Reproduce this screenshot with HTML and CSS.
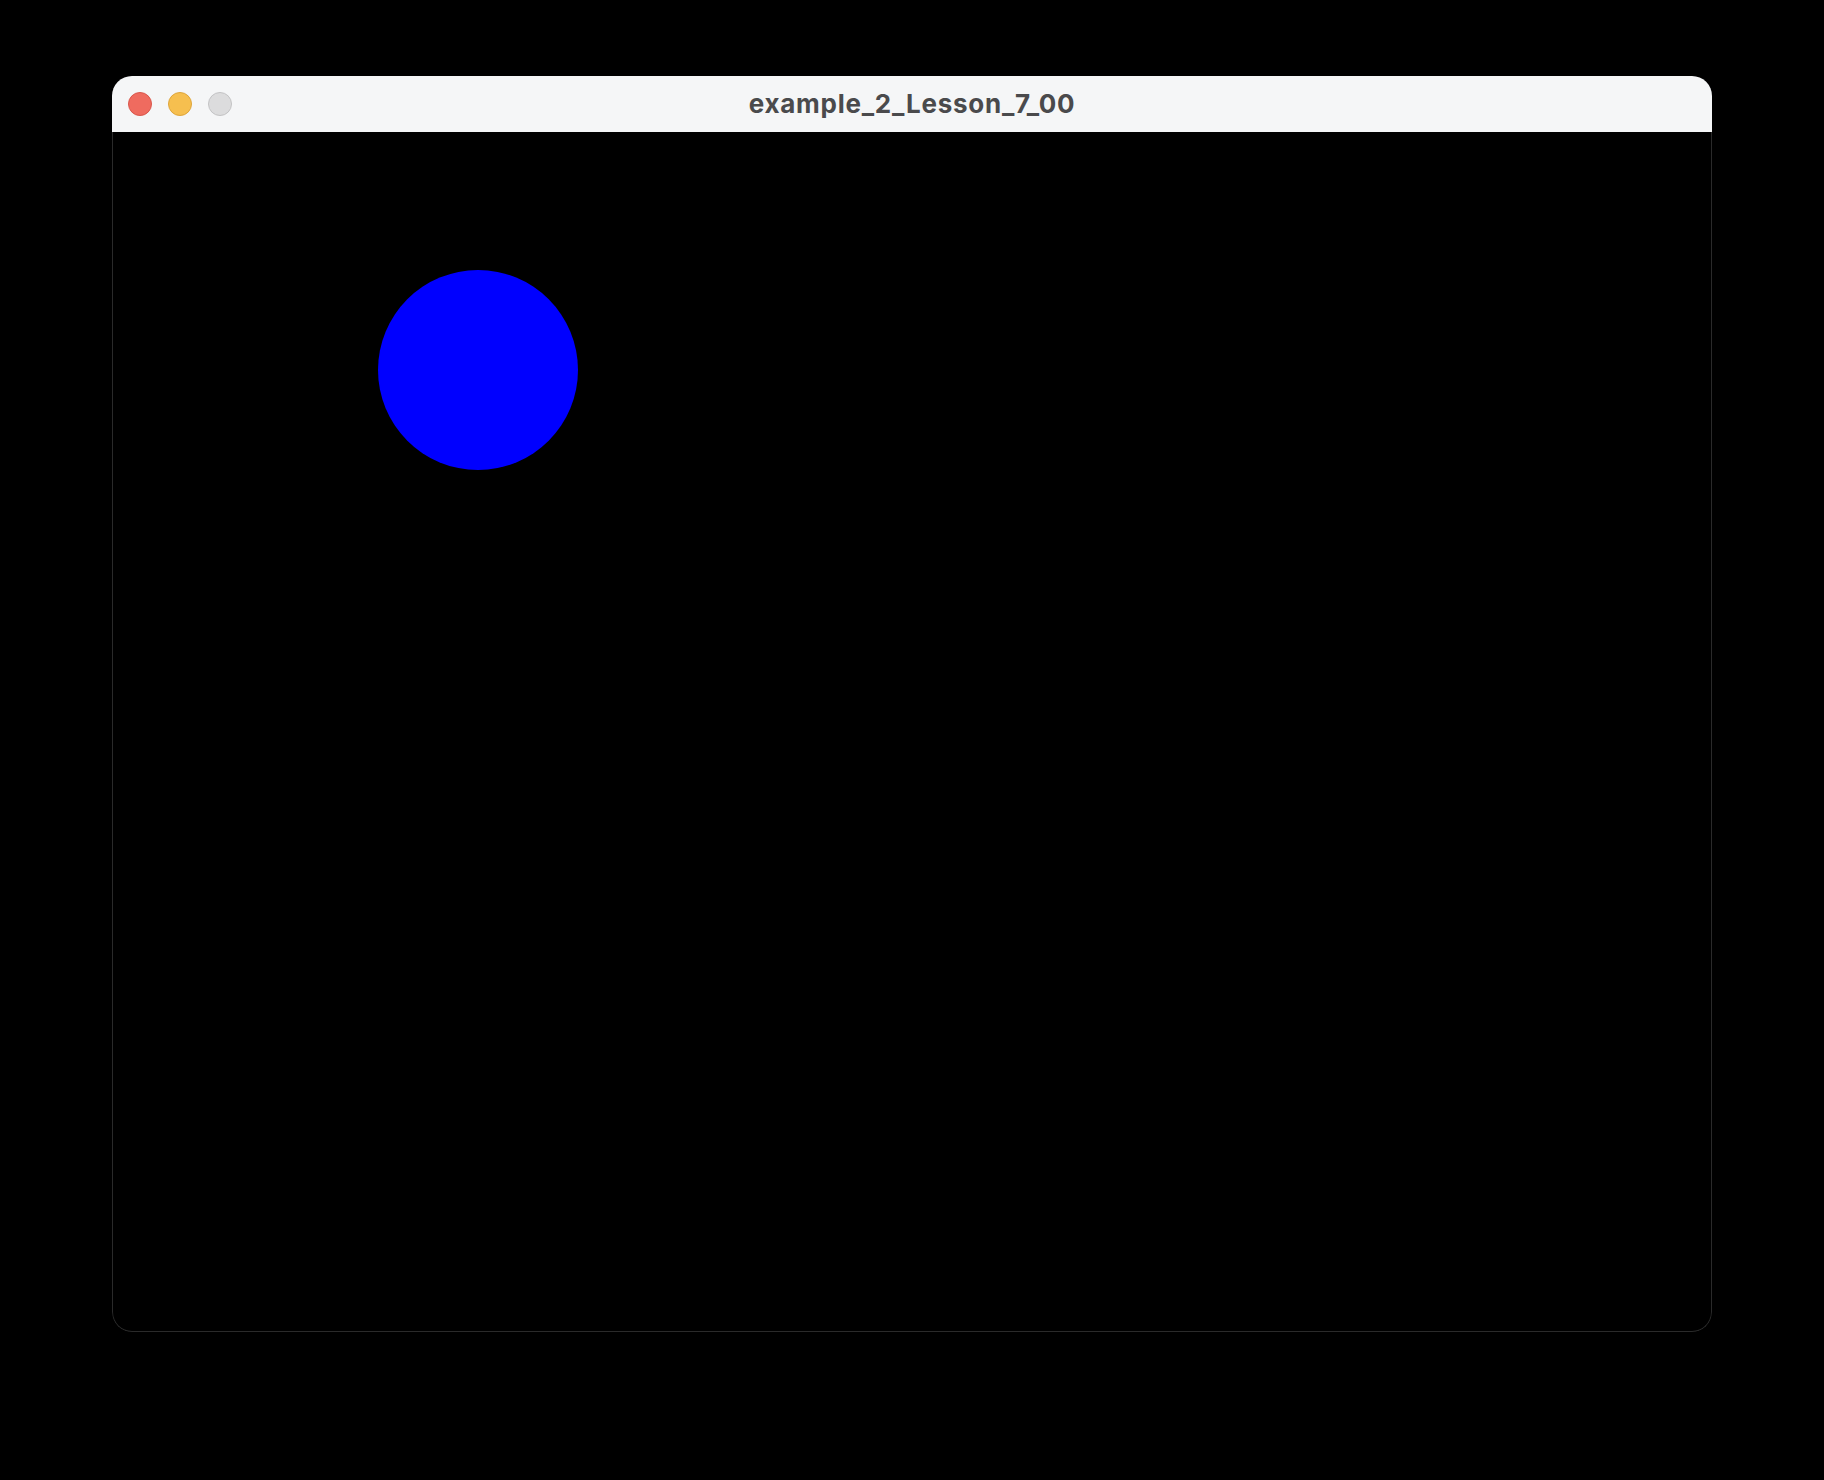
FILE: index.html
```html
<!DOCTYPE html>
<html>
<head>
<meta charset="utf-8">
<link rel="stylesheet" href="styles.css">
</head>
<body>
<div class="window">
  <div class="titlebar">
    <div class="lights">
      <span class="light red"></span>
      <span class="light yellow"></span>
      <span class="light gray"></span>
    </div>
    <div class="title">example_2_Lesson_7_00</div>
  </div>
  <div class="canvas">
    <svg width="1598" height="1199" viewBox="1 0 1598 1199">
      <circle cx="366" cy="238" r="100" fill="#0000ff"/>
    </svg>
  </div>
</div>
</body>
</html>
```
FILE: styles.css
```css
html, body {
  margin: 0;
  padding: 0;
  background: #000;
}
body {
  padding: 76px 0 0 112px;
  width: 1824px;
  height: 1480px;
  box-sizing: border-box;
}
.window {
  width: 1600px;
  border-radius: 20px;
  overflow: hidden;
}
.titlebar {
  height: 56px;
  background: #f5f6f7;
  display: flex;
  align-items: center;
  position: relative;
}
.lights {
  display: flex;
  gap: 16px;
  padding-left: 16px;
}
.light {
  width: 24px;
  height: 24px;
  border-radius: 50%;
  box-sizing: border-box;
  display: block;
}
.red { background: #ef6b5f; border: 1px solid #d9574c; }
.yellow { background: #f6bf4f; border: 1px solid #dea53b; }
.gray { background: #dcdcdd; border: 1px solid #c3c3c4; }
.title {
  position: absolute;
  left: 0;
  right: 0;
  top: 0;
  bottom: 2px;
  display: flex;
  align-items: center;
  justify-content: center;
  font-family: "Inter", "Liberation Sans", sans-serif;
  font-weight: 700;
  font-size: 26px;
  letter-spacing: 0.75px;
  color: #4a4a4c;
  pointer-events: none;
}
.canvas {
  height: 1200px;
  background: #000;
  border: 1px solid #2a2a2a;
  border-top: none;
  border-radius: 0 0 20px 20px;
  box-sizing: border-box;
}
.canvas svg {
  display: block;
}
```
